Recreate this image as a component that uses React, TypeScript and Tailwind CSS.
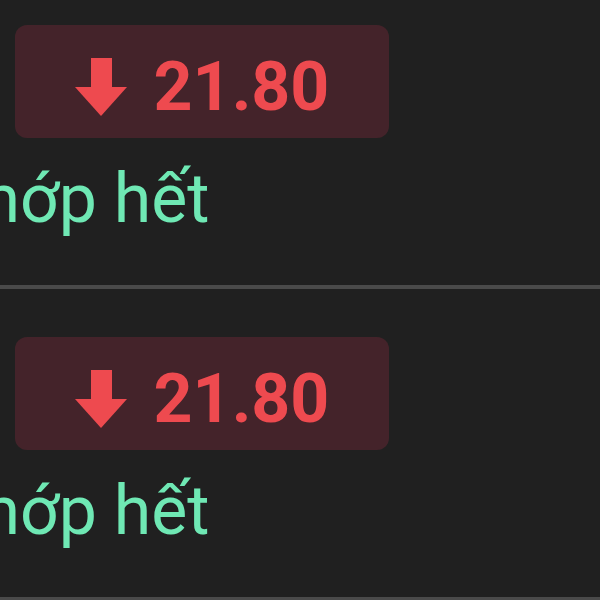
import React from "react";

function ArrowDown() {
  return (
    <svg width="52" height="58" viewBox="0 0 52 58" className="shrink-0">
      <rect x="16" y="0" width="21" height="31" fill="#ee4a4f" />
      <polygon points="0,29 52,29 26,58" fill="#ee4a4f" />
    </svg>
  );
}

function Row() {
  return (
    <div className="flex flex-col">
      <div className="h-[308px] pt-[48px] flex flex-col">
        <div className="ml-[15px] w-[374px] h-[113px] rounded-[12px] bg-[#44232a] flex items-center justify-center gap-[27px] pt-[10px]">
          <ArrowDown />
          <span className="text-[68px] leading-none font-bold text-[#ee4a4f] font-['Roboto',sans-serif]">
            21.80
          </span>
        </div>
        <div className="ml-[-52px] mt-[27px] text-[68px] leading-none text-[#6fe8b4] font-['Roboto',sans-serif] whitespace-nowrap">
          khớp hết
        </div>
      </div>
      <div className="h-[4px] bg-[#4a4a4a]" />
    </div>
  );
}

export default function App() {
  return (
    <div className="w-[600px] h-[600px] overflow-hidden bg-[#202020]">
      <div className="mt-[-23px] flex flex-col">
        <Row />
        <Row />
      </div>
    </div>
  );
}
